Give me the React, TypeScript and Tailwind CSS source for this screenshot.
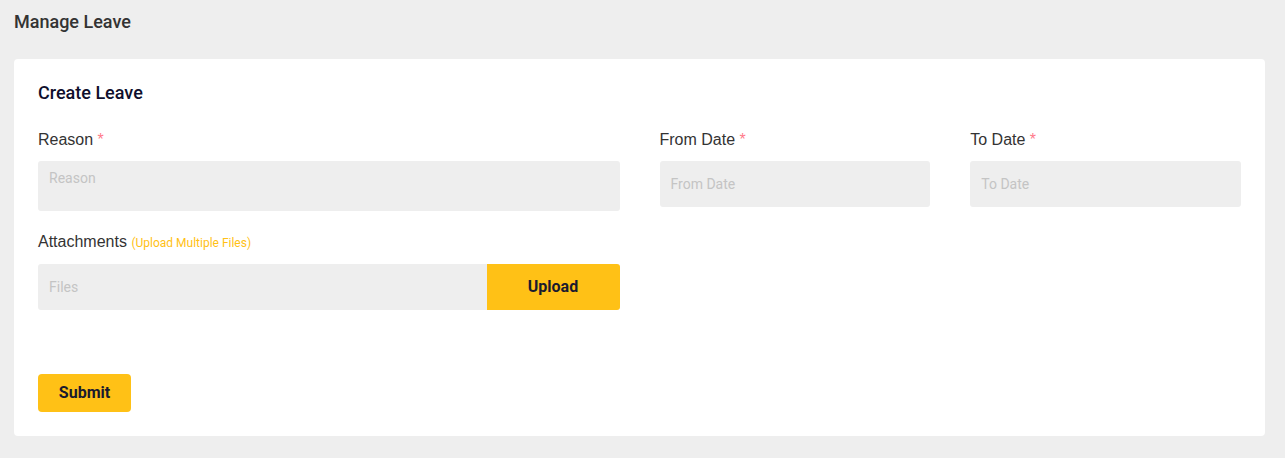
export default function App() {
  const label = "block pt-px text-[16px] leading-6 text-[#333] font-['Liberation_Sans',Arial,sans-serif]";
  const input =
    "w-full h-[46px] rounded-[3px] bg-[#eeeeee] px-[11px] text-[14px] text-[#333] placeholder:text-[#c4c4c4] outline-none font-['Roboto',sans-serif]";

  return (
    <div className="min-h-[458px] bg-[#eeeeee] pl-[14px] pr-[20px] pt-[10px] pb-[22px] font-['Roboto',sans-serif]">
      <h1 className="text-[18px] leading-6 font-medium text-[#333]">Manage Leave</h1>

      <div className="mt-[25px] rounded-[4px] bg-white p-6">
        <h2 className="text-[18px] leading-5 font-medium text-[#0f0f2d]">Create Leave</h2>

        <div className="mt-6 grid grid-cols-12 gap-x-10">
          <div className="col-span-6">
            <label className={label}>
              Reason <span className="text-[#ff7a8a]">*</span>
            </label>
            <textarea
              placeholder="Reason"
              className="mt-[9px] block h-[50px] w-full resize-none rounded-[3px] bg-[#eeeeee] px-[11px] pt-[7px] text-[14px] leading-5 text-[#333] placeholder:text-[#c4c4c4] outline-none font-['Roboto',sans-serif]"
            />
          </div>
          <div className="col-span-3">
            <label className={label}>
              From Date <span className="text-[#ff7a8a]">*</span>
            </label>
            <input placeholder="From Date" className={"mt-[9px] block " + input} />
          </div>
          <div className="col-span-3">
            <label className={label}>
              To Date <span className="text-[#ff7a8a]">*</span>
            </label>
            <input placeholder="To Date" className={"mt-[9px] block " + input} />
          </div>

          <div className="col-span-6 mt-[18px]">
            <label className={label}>
              Attachments{" "}
              <span className="text-[12px] text-[#ffc116] font-['Roboto',sans-serif]">
                (Upload Multiple Files)
              </span>
            </label>
            <div className="mt-[9px] flex">
              <input
                placeholder="Files"
                className="h-[46px] flex-1 rounded-l-[3px] bg-[#eeeeee] px-[11px] text-[14px] text-[#333] placeholder:text-[#c4c4c4] outline-none"
              />
              <button className="h-[46px] w-[133px] rounded-r-[3px] bg-[#ffc116] text-[16px] font-bold text-[#1a1a2e]">
                Upload
              </button>
            </div>
          </div>
        </div>

        <button className="mt-16 h-[38px] w-[93px] rounded-[4px] bg-[#ffc116] text-[16px] font-bold text-[#1a1a2e]">
          Submit
        </button>
      </div>
    </div>
  );
}
